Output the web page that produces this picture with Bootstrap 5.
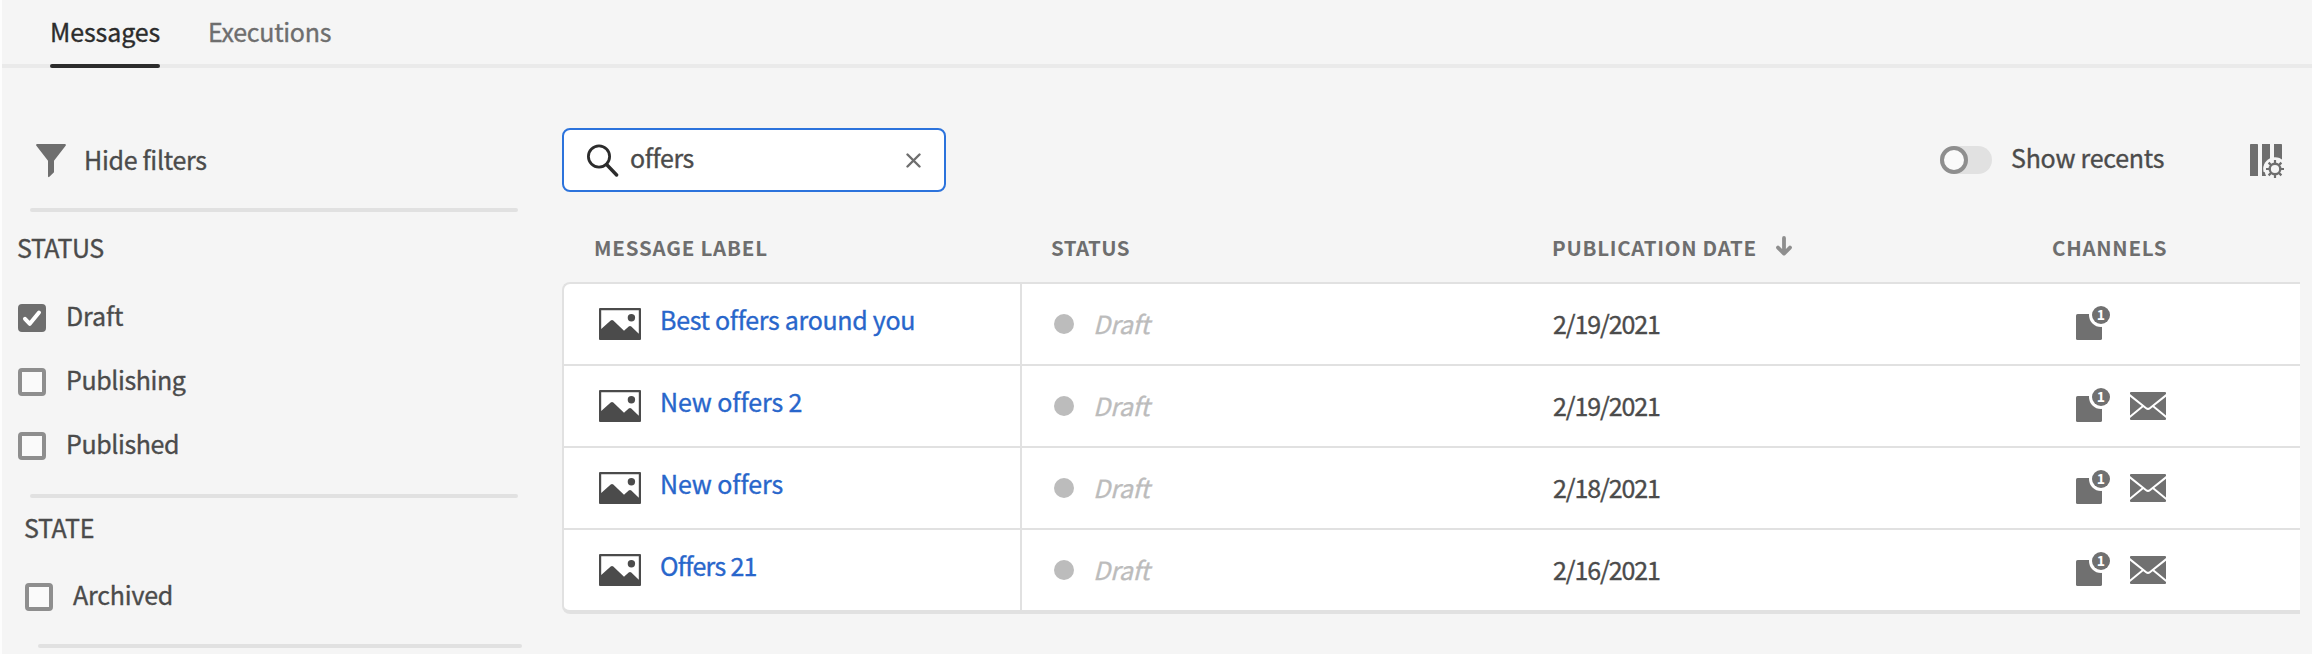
<!DOCTYPE html>
<html lang="en">
<head>
<meta charset="utf-8">
<meta name="viewport" content="width=device-width, initial-scale=1">
<title>Messages</title>
<link href="https://cdn.jsdelivr.net/npm/bootstrap@5.3.0/dist/css/bootstrap.min.css" rel="stylesheet">
<script src="https://cdn.jsdelivr.net/npm/bootstrap@5.3.0/dist/js/bootstrap.bundle.min.js"></script>
<style>
  body{font:400 25px/40px "Noto Sans CJK JP","Noto Sans",sans-serif;color:#4b4b4b;background:#f5f5f5;border-left:2px solid #fdfdfd;height:654px;overflow:hidden;-webkit-text-stroke:.35px}
  svg{display:block;flex:none}
  .tabs{height:68px;padding-left:47px;gap:48px;box-shadow:inset 0 -4px #eaeaea}
  .tabs .nav-link{padding:11px 0 0 0;color:#6e6e6e;height:68px;letter-spacing:-.3px}
  .tabs .nav-link.active{width:110px;margin-left:1px;color:#2c2c2c;letter-spacing:-.1px;position:relative;white-space:nowrap}
  .tabs .nav-link.active::after{content:"";position:absolute;left:0;right:0;bottom:0;height:4px;border-radius:2px;background:#2c2c2c}
  .filters{width:560px;padding-top:71px}
  .filters hr{height:4px;border:0;border-radius:2px;background:#e1e1e1;opacity:1;margin:0 44px 0 28px}
  .filters h2{font-size:25px;font-weight:400;line-height:40px;margin:0;letter-spacing:-.45px}
  .check-row{height:40px;letter-spacing:-.4px;padding-left:16px;margin-bottom:24px}
  .check-row .form-check-input{width:28px;height:28px;border:4px solid #8e8e8e;border-radius:4px;background-color:#fafafa;margin:6px 20px 0 0;flex:none}
  .check-row .form-check-input:checked{border-color:#6e6e6e;background:#6e6e6e url("data:image/svg+xml,%3csvg xmlns='http://www.w3.org/2000/svg' viewBox='0 0 28 28'%3e%3cpath fill='none' stroke='%23fff' stroke-width='4' stroke-linecap='round' stroke-linejoin='round' d='M7 14.8l4.8 5L21 8.5'/%3e%3c/svg%3e") center/28px 28px no-repeat}
  .search{width:384px;height:64px;border:2px solid #2c73dc;border-radius:8px;background:#fff;padding:0 23px}
  .search input{border:0;padding:0;height:40px;font:inherit;color:inherit;background:none;margin:-6px 0 0 11px;min-width:0;flex:1;outline:0;letter-spacing:-.4px}
  .switch{width:52px;height:28px;border-radius:14px;background:#e1e1e1}
  .knob{width:28px;height:28px;border:4px solid #8e8e8e;border-radius:50%;background:#fafafa}
  .g{display:grid;grid-template-columns:458px 500px 500px 1fr}
  .heads{height:90px;padding:35px 0 0 2px;font-size:20.5px;font-weight:700;color:#6e6e6e;letter-spacing:.8px;white-space:nowrap;-webkit-text-stroke:0}
  .grid-box{width:1738px;border:solid #e1e1e1;border-width:2px 0 4px 2px;border-radius:8px 0 0 8px;background:#fff}
  .grid-box .g{height:80px}
  .grid-box .g + .g{border-top:2px solid #e1e1e1;height:82px}
  .label-cell{border-right:2px solid #e1e1e1;padding:15px 0 0 35px}
  .label-cell a{color:#2866cb;text-decoration:none;margin-left:19px}
  .label-cell svg{margin-top:9px}
  .status-cell{padding:19px 0 0 32px;color:#bcbcbc;font-style:italic;letter-spacing:-.3px}
  .dot{width:20px;height:20px;border-radius:50%;background:#bcbcbc;margin:11px 19px 0 0}
  .date-cell{padding:19px 0 0 31px;letter-spacing:-1.1px}
  .chan-cell{padding:21px 0 0 54px;gap:24px}
</style>
</head>
<body>
<svg width="0" height="0" class="position-absolute">
  <symbol id="picture" viewBox="0 0 42 32"><path fill="#4b4b4b" fill-rule="evenodd" d="M1 0H41Q42 0 42 1V31Q42 32 41 32H1Q0 32 0 31V1Q0 0 1 0ZM2.2 2.2V21L11.7 12.5Q13 11.5 14.3 12.5L25 22.8L29.7 18.6Q31 17.6 32.3 18.6L39.8 25.8V2.2Z"/><circle cx="32.4" cy="9.8" r="3.7" fill="#4b4b4b"/></symbol>
  <symbol id="mail" viewBox="0 0 36 28"><rect width="36" height="28" rx="1" fill="#707070"/><path d="M-1 2.6L16.2 16.2Q18 17.6 19.8 16.2L37 2.6M-1 25.6L12.8 14.2M37 25.6L23.2 14.2" fill="none" stroke="#fff" stroke-width="2"/></symbol>
</svg>

<nav class="nav tabs">
  <a class="nav-link active" href="#">Messages</a>
  <a class="nav-link" href="#">Executions</a>
</nav>

<div class="d-flex">
  <aside class="filters flex-shrink-0">
    <div class="d-flex" style="height:69px;padding-left:34px">
      <svg width="30" height="34" viewBox="0 0 30 34" style="margin-top:5px"><path fill="#6e6e6e" d="M.8 0H29.2Q30.3 .7 29.6 1.8L18 16.8V28.2L13.4 32.8Q12 33.8 12 32V16.8L.4 1.8Q-.3 .7 .8 0Z"/></svg>
      <span style="margin-left:18px;letter-spacing:-.3px">Hide filters</span>
    </div>
    <hr>
    <h2 style="padding:15px 0 28px 15px;height:83px">STATUS</h2>
    <label class="check-row d-flex align-items-center" style="letter-spacing:-.1px"><input class="form-check-input" type="checkbox" checked>Draft</label>
    <label class="check-row d-flex align-items-center"><input class="form-check-input" type="checkbox">Publishing</label>
    <label class="check-row d-flex align-items-center" style="margin-bottom:31px"><input class="form-check-input" type="checkbox">Published</label>
    <hr>
    <h2 style="padding:9px 0 0 22px;height:76px;letter-spacing:-.3px">STATE</h2>
    <label class="check-row d-flex align-items-center" style="padding-left:23px;margin-bottom:30px;letter-spacing:-.2px"><input class="form-check-input" type="checkbox">Archived</label>
    <hr style="margin:0 40px 0 36px">
  </aside>

  <main class="flex-grow-1" style="padding-top:60px">
    <div class="d-flex align-items-center">
      <div class="search d-flex align-items-center">
        <svg width="32" height="33" viewBox="0 0 32 33"><circle cx="12" cy="12.5" r="10.6" fill="none" stroke="#2c2c2c" stroke-width="2.8"/><path d="M19.6 20.5L29.6 31" stroke="#2c2c2c" stroke-width="3.4" stroke-linecap="round"/></svg>
        <input type="text" value="offers" aria-label="Search">
        <svg width="15" height="15" viewBox="0 0 15 15"><path d="M1.5 1.5L13.5 13.5M13.5 1.5L1.5 13.5" stroke="#6e6e6e" stroke-width="2.4" stroke-linecap="round"/></svg>
      </div>
      <div class="switch" style="margin-left:994px"><div class="knob"></div></div>
      <span style="margin:-6px 0 0 19px;letter-spacing:-.25px;width:157px">Show recents</span>
      <svg width="36" height="36" viewBox="0 0 36 36" style="margin:2px 0 0 82px">
        <path fill="#6e6e6e" d="M.8 1H7.2Q8 1 8 1.8V33H0V1.8Q0 1 .8 1ZM12 1H20V33H12ZM24 1H31.2Q32 1 32 1.8V33H24Z"/>
        <circle cx="25" cy="26" r="11.8" fill="#f5f5f5"/><path d="M16 26h18v9H16z" fill="#f5f5f5"/>
        <path d="M12 29h2.6l1.4 4h-4z" fill="#6e6e6e"/>
        <circle cx="25" cy="26" r="5.3" fill="none" stroke="#6e6e6e" stroke-width="2.4"/>
        <path stroke="#6e6e6e" stroke-width="2.2" d="M25 17v4M25 31v4M16 26h4M30 26h4M18.6 19.6l2.8 2.8M28.6 29.6l2.8 2.8M18.6 32.4l2.8-2.8M28.6 22.4l2.8-2.8"/>
      </svg>
    </div>

    <div class="g heads">
      <span style="padding-left:30px">MESSAGE LABEL</span>
      <span style="padding-left:29px;letter-spacing:.4px">STATUS</span>
      <span class="d-flex" style="padding-left:30px;letter-spacing:.72px">PUBLICATION DATE
        <svg width="16" height="20" viewBox="0 0 16 20" style="margin:9px 0 0 19px"><path d="M8 2V17M2 11.6L8 17.6L14 11.6" fill="none" stroke="#8e8e8e" stroke-width="3.8" stroke-linecap="round" stroke-linejoin="round"/></svg>
      </span>
      <span style="padding-left:30px;letter-spacing:.72px">CHANNELS</span>
    </div>

    <div class="grid-box" id="rows"></div>
  </main>
</div>

<script>
  const rows = [
    ["Best offers around you", "2/19/2021", false, "-.3px"],
    ["New offers 2", "2/19/2021", true, "-.1px"],
    ["New offers", "2/18/2021", true, "-.1px"],
    ["Offers 21", "2/16/2021", true, "-.7px"]
  ];
  document.getElementById("rows").innerHTML = rows.map(([label, date, mail, spacing]) => `
    <div class="g">
      <div class="label-cell d-flex"><svg width="42" height="32"><use href="#picture"/></svg><a href="#" style="letter-spacing:${spacing}">${label}</a></div>
      <div class="status-cell d-flex"><span class="dot"></span>Draft</div>
      <div class="date-cell">${date}</div>
      <div class="chan-cell d-flex">
        <svg width="34" height="36" viewBox="0 0 34 36" style="margin-right:-4px"><rect y="9" width="26" height="26" rx="1.6" fill="#707070"/><circle cx="25" cy="10" r="12" fill="#fff"/><circle cx="25" cy="10" r="9" fill="#707070"/><text x="25" y="15" text-anchor="middle" font-size="14" font-weight="700" fill="#fff">1</text></svg>
        ${mail ? '<svg width="36" height="28" style="margin-top:5px"><use href="#mail"/></svg>' : ''}
      </div>
    </div>`).join("");
</script>
</body>
</html>
